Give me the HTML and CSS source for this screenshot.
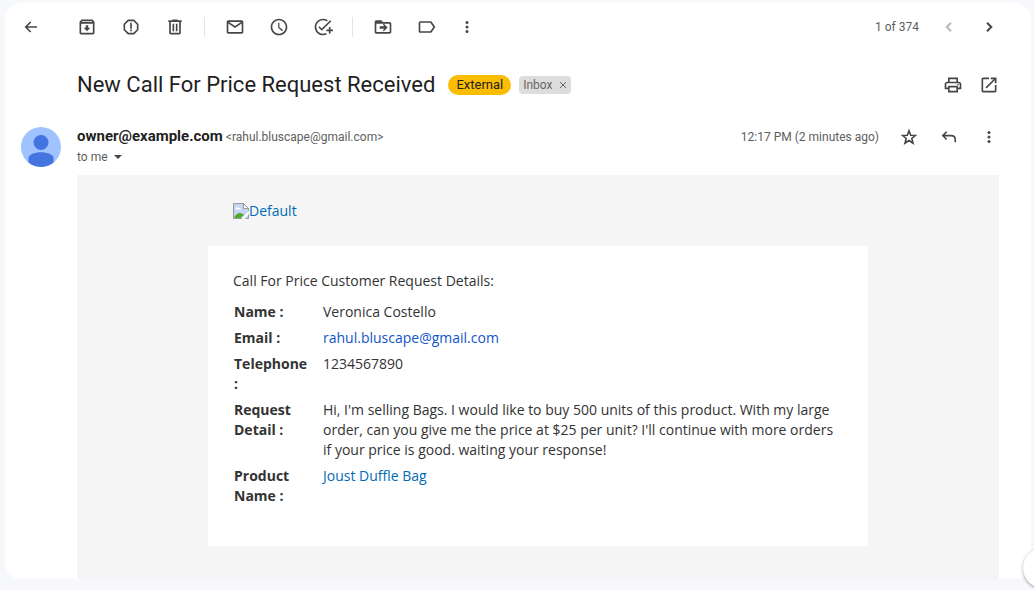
FILE: index.html
```html
<!DOCTYPE html>
<html lang="en">
<head>
<meta charset="utf-8">
<meta name="viewport" content="width=device-width, initial-scale=1">
<title>New Call For Price Request Received</title>
<link rel="stylesheet" href="styles.css">
</head>
<body>
<main class="panel">
  <div class="toolbar" role="toolbar" aria-label="Message actions">
    <button class="icon-btn back" aria-label="Back"><svg viewBox="0 0 20 20"><path class="line" d="M16 10H5M9.700 5L4.700 10l5 5"/></svg></button>
    <div class="group">
      <button class="icon-btn" aria-label="Archive"><svg viewBox="0 0 24 24"><path d="M20.540 5.230l-1.390-1.680C18.880 3.210 18.470 3 18 3H6c-.47 0-.88.21-1.160.55L3.460 5.230C3.170 5.570 3 6.020 3 6.500V19c0 1.100.9 2 2 2h14c1.100 0 2-.9 2-2V6.500c0-.48-.17-.93-.46-1.270zM6.240 5h11.520l.83 1H5.420l.82-1zM5 19V8h14v11H5zm8.450-9h-2.900v3H8l4 4 4-4h-2.550z"/></svg></button>
      <button class="icon-btn" aria-label="Report spam"><svg viewBox="0 0 24 24"><path d="M15.730 3H8.270L3 8.270v7.460L8.270 21h7.460L21 15.730V8.270L15.730 3zM19 14.900L14.900 19H9.100L5 14.900V9.100L9.100 5h5.800L19 9.100v5.800zM11 7h2v7h-2zM11 15h2v2h-2z"/></svg></button>
      <button class="icon-btn" aria-label="Delete"><svg viewBox="0 0 24 24"><path d="M15 4V3H9v1H4v2h1v13c0 1.100.9 2 2 2h10c1.100 0 2-.9 2-2V6h1V4h-5zm2 15H7V6h10v13zM9 8h2v9H9zm4 0h2v9h-2z"/></svg></button>
    </div>
    <div class="group divided">
      <button class="icon-btn" aria-label="Mark as unread"><svg viewBox="0 0 24 24"><path d="M20 4H4c-1.100 0-2 .9-2 2v12c0 1.100.9 2 2 2h16c1.100 0 2-.9 2-2V6c0-1.100-.9-2-2-2zm-.8 2L12 10.800 4.800 6h14.400zM4 18V7.870l8 5.330 8-5.330V18H4z"/></svg></button>
      <button class="icon-btn" aria-label="Snooze"><svg viewBox="0 0 24 24"><path d="M12 2C6.500 2 2 6.500 2 12s4.500 10 10 10 10-4.500 10-10S17.500 2 12 2zm0 18c-4.410 0-8-3.590-8-8s3.590-8 8-8 8 3.590 8 8-3.590 8-8 8zm.5-13H11v6l4.700 4.200 1.100-1.500-4.300-3.500V7z"/></svg></button>
      <button class="icon-btn" aria-label="Add to tasks"><svg viewBox="0 0 24 24"><path d="M22 5.180L10.590 16.600l-4.240-4.240 1.410-1.410 2.830 2.830 10-10L22 5.180zM12 20c-4.410 0-8-3.590-8-8s3.590-8 8-8c1.570 0 3.040.46 4.280 1.250l1.450-1.450C16.100 2.670 14.130 2 12 2 6.480 2 2 6.480 2 12s4.480 10 10 10c1.730 0 3.360-.44 4.780-1.220l-1.500-1.500c-1 .46-2.110.72-3.280.72zm7-5h-3v2h3v3h2v-3h3v-2h-3v-3h-2v3z"/></svg></button>
    </div>
    <div class="group divided">
      <button class="icon-btn" aria-label="Move to"><svg viewBox="0 0 24 24"><path d="M20 6h-8l-2-2H4c-1.100 0-2 .9-2 2v12c0 1.100.9 2 2 2h16c1.100 0 2-.9 2-2V8c0-1.100-.9-2-2-2zm0 12H4V8h16v10zM11.800 9.200L13.600 11H8v3h5.600l-1.800 1.800L13 17l4.500-4.500L13 8z"/></svg></button>
      <button class="icon-btn" aria-label="Labels"><svg viewBox="0 0 24 24"><path d="M17.630 5.840C17.270 5.330 16.670 5 16 5L4 5.010C2.900 5.010 2 5.900 2 7v10c0 1.100.9 1.990 2 1.990L16 19c.67 0 1.270-.33 1.630-.84L22 12l-4.370-6.160zM16 17H4V7h12l3.550 5L16 17z"/></svg></button>
      <button class="icon-btn slim" aria-label="More"><svg viewBox="0 0 20 20"><circle cx="10" cy="5.500" r="1.500"/><circle cx="10" cy="10" r="1.500"/><circle cx="10" cy="14.500" r="1.500"/></svg></button>
    </div>
    <div class="pager">
      <span class="count">1 of 374</span>
      <button class="icon-btn narrow" aria-label="Newer" disabled><svg viewBox="0 0 20 20"><path class="line" d="M12 5.700L7.700 10l4.300 4.300"/></svg></button>
      <button class="icon-btn narrow" aria-label="Older"><svg viewBox="0 0 20 20"><path class="line" d="M8 5.700l4.300 4.300L8 14.300"/></svg></button>
    </div>
  </div>

  <header class="subject">
    <h1>New Call For Price Request Received</h1>
    <span class="external">External</span>
    <span class="label">Inbox <button class="remove" aria-label="Remove label Inbox"><svg viewBox="0 0 8 8"><path d="M1 1l6 6M7 1L1 7"/></svg></button></span>
    <div class="actions">
      <button class="icon-btn slim" aria-label="Print"><svg viewBox="0 0 24 24"><path d="M19 8h-1V3H6v5H5c-1.660 0-3 1.340-3 3v6h4v4h12v-4h4v-6c0-1.660-1.340-3-3-3zM8 5h8v3H8V5zm8 14H8v-4h8v4zm4-4h-2v-2H6v2H4v-4c0-.55.45-1 1-1h14c.55 0 1 .45 1 1v4z"/><circle cx="18" cy="11.500" r="1"/></svg></button>
      <button class="icon-btn slim" aria-label="Open in new window"><svg viewBox="0 0 24 24"><path d="M19 19H5V5h7V3H5c-1.110 0-2 .9-2 2v14c0 1.100.89 2 2 2h14c1.100 0 2-.9 2-2v-7h-2v7zM14 3v2h3.590l-9.830 9.830 1.410 1.410L19 6.410V10h2V3h-7z"/></svg></button>
    </div>
  </header>

  <section class="sender">
    <svg class="avatar" viewBox="0 0 40 40" role="img" aria-label="Sender"><circle cx="20" cy="20" r="20" fill="#a0c3ff"/><circle cx="20" cy="15.500" r="7.500" fill="#4374e0"/><path d="M7.500 35.600V31c0-3.600 6-5.800 12.500-5.800S32.500 27.400 32.500 31v4.600A20 20 0 0 1 7.500 35.600z" fill="#4374e0"/></svg>
    <div class="who">
      <div class="from"><strong>owner@example.com</strong> <span>&lt;rahul.bluscape@gmail.com&gt;</span></div>
      <div class="to">to me <button class="details" aria-label="Show details"><svg viewBox="0 0 8 4"><path d="M0 0h8L4 4z"/></svg></button></div>
    </div>
    <div class="meta">
      <time>12:17 PM (2 minutes ago)</time>
      <button class="icon-btn narrow" aria-label="Star"><svg viewBox="0 0 20 20"><path class="line star" d="M10 3.800l1.700 4.400 4.700.3-3.600 3 1.200 4.600-4-2.600-4 2.600 1.200-4.600-3.600-3 4.700-.3z"/></svg></button>
      <button class="icon-btn narrow" aria-label="Reply"><svg viewBox="0 0 20 20"><path class="line thin" d="M7.700 4.700L3.800 8.600l3.900 3.900M4 8.600h8c2.600 0 4.300 1.700 4.300 4.200v2.500"/></svg></button>
      <button class="icon-btn narrow" aria-label="More message options"><svg viewBox="0 0 20 20"><circle cx="10" cy="5.500" r="1.500"/><circle cx="10" cy="10" r="1.500"/><circle cx="10" cy="14.500" r="1.500"/></svg></button>
    </div>
  </section>

  <article class="mail">
    <div class="wrapper">
      <div class="brand">
        <a href="#"><svg viewBox="0 0 16 16" aria-hidden="true"><path d="M.5.500h10l5 5v10H.5z" fill="#c5d6f5"/><path d="M2.500 6c0-2 3-2.500 3.500-1 1.500 0 2 .5 2 1.500H2.500z" fill="#fff"/><path d="M1 15c1-3 3.500-5 6-5 2 0 3.500 1 4 2l-3.500 3z" fill="#54a82f"/><path d="M8 16l8-8v3l-5 5z" fill="#fff"/><path d="M10.500.500v5h5z" fill="#fff"/><path d="M9 15.500H.5V.500h10l5 5V8M10.500.500v5h5M12.500 15.500h3v-4" fill="none" stroke="#9a9a9a"/></svg>Default</a>
      </div>
      <div class="card">
        <p>Call For Price Customer Request Details:</p>
        <table>
          <tr><th scope="row">Name :</th><td>Veronica Costello</td></tr>
          <tr><th scope="row">Email :</th><td><a class="address" href="mailto:rahul.bluscape@gmail.com">rahul.bluscape@gmail.com</a></td></tr>
          <tr><th scope="row">Telephone :</th><td>1234567890</td></tr>
          <tr><th scope="row">Request Detail :</th><td>Hi, I'm selling Bags. I would like to buy 500 units of this product. With my large order, can you give me the price at $25 per unit? I'll continue with more orders if your price is good. waiting your response!</td></tr>
          <tr><th scope="row">Product Name :</th><td><a href="#">Joust Duffle Bag</a></td></tr>
        </table>
      </div>
    </div>
  </article>
</main>
<button class="side-toggle" aria-label="Show side panel"><svg viewBox="0 0 20 20"><path class="line" d="M16 6l-4 4 4 4"/></svg></button>
</body>
</html>
```
FILE: styles.css
```css
* {
  box-sizing: border-box;
}

body {
  margin: 0;
  padding: 3px 3px 11px 5px;
  overflow-x: hidden;
  background: #f6f8fc;
  color: #5e5e5e;
  font: 12px/20px Roboto, sans-serif;
}

button {
  padding: 0;
  border: 0;
  background: none;
  color: inherit;
  font: inherit;
  cursor: pointer;
}

.panel {
  overflow: hidden;
  border-radius: 16px;
  background: #fff;
}

/* Icons */
.icon-btn {
  display: flex;
  flex: none;
  align-items: center;
  justify-content: center;
  width: 44px;
  height: 40px;
  color: #444746;
}

.icon-btn svg {
  width: 20px;
  height: 20px;
  fill: currentColor;
}

.icon-btn.narrow {
  width: 40px;
}

.icon-btn.slim {
  width: 36px;
}

.icon-btn:disabled {
  color: #b8b8b8;
}

.icon-btn .line,
.side-toggle .line {
  fill: none;
  stroke: currentColor;
  stroke-width: 2;
}

.icon-btn .star,
.icon-btn .thin,
.back .line {
  stroke-width: 1.6;
}

/* Toolbar */
.toolbar {
  display: flex;
  align-items: center;
  height: 48px;
  padding: 0 22px 0 4px;
}

.back {
  margin-right: 12px;
}

.group {
  display: flex;
  align-items: center;
}

.divided::before {
  content: "";
  width: 1px;
  height: 20px;
  margin: 0 8px 0 7px;
  background: #e3e5e8;
}

.pager {
  display: flex;
  align-items: center;
  margin-left: auto;
}

.count {
  margin-right: 10px;
}

/* Subject */
.subject {
  display: flex;
  align-items: center;
  padding: 14px 24px 0 72px;
}

h1 {
  margin: 0 13px 0 0;
  color: #1f1f1f;
  font-size: 22px;
  font-weight: 400;
  line-height: 28px;
}

.external {
  margin-right: 8px;
  padding: 0 8px;
  border-radius: 10px;
  background: #fbbc04;
  color: #222;
  font-size: 13px;
}

.label {
  display: flex;
  align-items: center;
  gap: 6px;
  padding: 0 4px;
  border-radius: 4px;
  background: #ddd;
  color: #666;
  line-height: 18px;
}

.remove {
  display: flex;
}

.remove svg {
  width: 8px;
  height: 8px;
  stroke: #666;
}

.actions {
  display: flex;
  margin-left: auto;
}

/* Sender */
.sender {
  display: flex;
  align-items: flex-start;
  padding: 12px 22px 0 16px;
}

.avatar {
  flex: none;
  width: 40px;
  height: 40px;
  margin: 10px 16px 0 0;
}

.who {
  padding: 10px 0 8px;
}

.from strong {
  color: #1f1f1f;
  font-size: 15px;
  line-height: 16px;
}

.to {
  display: flex;
  align-items: center;
  gap: 6px;
}

.details {
  display: flex;
}

.details svg {
  width: 8px;
  height: 4px;
  fill: #444746;
}

.meta {
  display: flex;
  align-items: center;
  margin-left: auto;
}

time {
  margin-right: 10px;
}

/* Message */
.mail {
  margin: 0 32px 0 72px;
  padding-bottom: 33px;
  background: #f5f5f5;
  color: #333;
  font: 14px/20px "Open Sans", sans-serif;
}

.mail a {
  color: #006bb4;
  text-decoration: none;
}

.mail .address {
  color: #1155cc;
}

.wrapper {
  max-width: 660px;
  margin: 0 auto;
}

.brand {
  display: flex;
  padding: 26px 25px 25px;
}

.brand a {
  display: flex;
  align-items: center;
}

.brand svg {
  width: 16px;
  height: 16px;
}

.card {
  padding: 25px 25px 37px;
  background: #fff;
}

.card p {
  margin: 0 0 8px;
}

table {
  width: 100%;
  border-collapse: collapse;
}

th,
td {
  padding: 3px 5px 3px 1px;
  text-align: left;
  vertical-align: top;
}

th {
  width: 89px;
  padding-right: 12px;
}

/* Collapsed side panel handle, partly past the window edge */
.side-toggle {
  position: fixed;
  right: -29px;
  bottom: 2px;
  width: 40px;
  height: 40px;
  border-radius: 50%;
  background: #fff;
  box-shadow: 0 1px 3px rgba(60, 64, 67, 0.5);
  color: #5e5e5e;
}

.side-toggle svg {
  display: block;
  width: 20px;
  height: 20px;
}
```
